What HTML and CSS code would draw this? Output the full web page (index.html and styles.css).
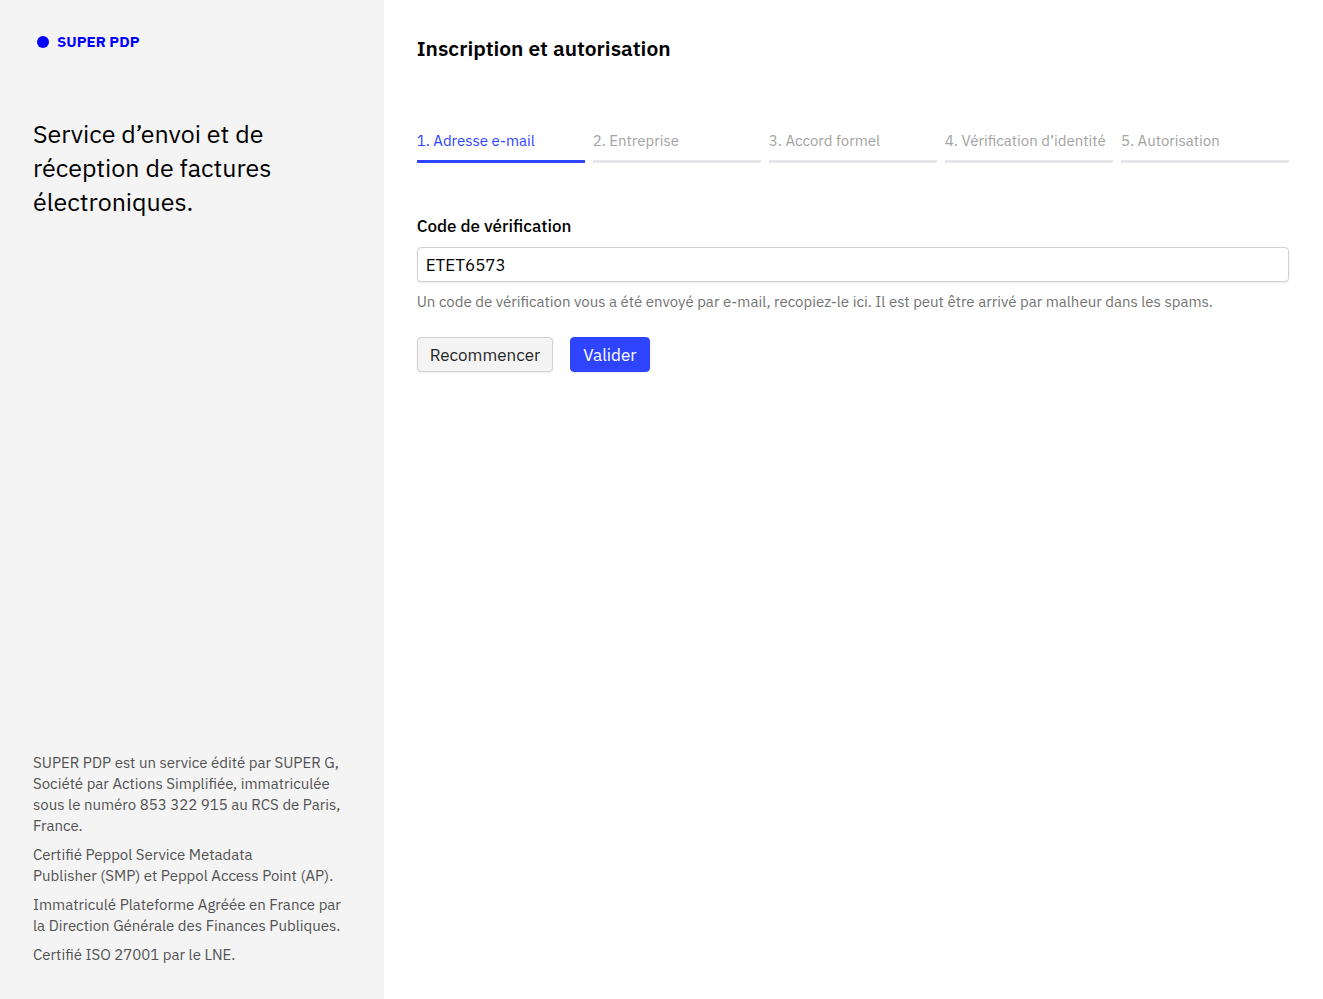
FILE: index.html
```html
<!DOCTYPE html>
<html lang="fr">
  <head>
    <meta charset="UTF-8" />
    <meta name="viewport" content="width=device-width, initial-scale=1.0" />
    <title>Inscription et autorisation - SUPER PDP</title>
    <link rel="stylesheet" href="styles.css">
  </head>
  <body>
    <aside class="sidebar">
      <div>
        <a class="logo" href="/">
          <svg width="12" height="12" viewBox="0 0 12 12" aria-hidden="true">
            <circle cx="6" cy="6" r="6" fill="currentColor" />
          </svg>
          SUPER PDP
        </a>
        <p class="tagline">Service d’envoi et de réception de factures électroniques.</p>
      </div>
      <footer class="legal">
        <p>SUPER PDP est un service édité par SUPER G, Société par Actions Simplifiée, immatriculée sous le numéro 853&nbsp;322&nbsp;915 au RCS de Paris, France.</p>
        <p>Certifié Peppol Service Metadata Publisher&nbsp;(SMP) et Peppol Access Point&nbsp;(AP).</p>
        <p>Immatriculé Plateforme Agréée en France par la Direction Générale des Finances Publiques.</p>
        <p>Certifié ISO 27001 par le LNE.</p>
      </footer>
    </aside>
    <main>
      <h1>Inscription et autorisation</h1>
      <ol class="steps">
        <li class="active">1. Adresse e-mail</li>
        <li>2. Entreprise</li>
        <li>3. Accord formel</li>
        <li>4. Vérification d’identité</li>
        <li>5. Autorisation</li>
      </ol>
      <form>
        <label for="code">Code de vérification</label>
        <input type="text" id="code" name="code" value="ETET6573" aria-describedby="codeHelp" />
        <p class="help" id="codeHelp">Un code de vérification vous a été envoyé par e-mail, recopiez-le ici. Il est peut être arrivé par malheur dans les spams.</p>
        <div class="actions">
          <button type="button">Recommencer</button>
          <button type="submit" class="primary">Valider</button>
        </div>
      </form>
    </main>
  </body>
</html>
```
FILE: styles.css
```css
* {
  box-sizing: border-box;
}

body {
  font-family: "IBM Plex Sans", Roboto, sans-serif;
  font-size: 17px;
  line-height: 25px;
  color: #000;
  background-color: #fff;
  margin: 0;
  display: flex;
  min-height: 100vh;
}

h1,
p {
  margin: 0;
}

.sidebar {
  flex: 0 0 29%;
  display: flex;
  flex-direction: column;
  justify-content: space-between;
  padding: 34px 33px;
  background-color: #f4f4f4;
}

.logo {
  display: flex;
  align-items: center;
  gap: 8px;
  padding-left: 4px;
  color: #00f;
  font-size: 15px;
  font-weight: 700;
  line-height: 16px;
  text-decoration: none;
}

.tagline {
  margin-top: 67px;
  font-size: 25px;
  line-height: 34px;
}

.legal {
  display: flex;
  flex-direction: column;
  gap: 8px;
  color: #525252;
  font-size: 15px;
  line-height: 21px;
}

main {
  flex: 1;
  min-width: 0;
  padding: 33px 34px 33px 33px;
}

h1 {
  font-size: 21px;
  font-weight: 600;
  line-height: 30px;
}

.steps {
  display: grid;
  grid-template-columns: repeat(5, 1fr);
  gap: 8px;
  list-style: none;
  margin: 67px 0 51px;
  padding: 0;
  color: #a3a3a3;
  font-size: 15px;
  line-height: 21px;
}

.steps li {
  padding-bottom: 9px;
  border-bottom: 3px solid #e5e5ea;
  white-space: nowrap;
}

.steps .active {
  color: #2e44ff;
  border-color: #2e44ff;
}

label {
  display: block;
  margin-bottom: 8px;
  font-weight: 500;
}

input,
button {
  height: 35px;
  border: 1px solid #d1d1d1;
  border-radius: 4px;
  box-shadow: 0 1px 2px rgba(0, 0, 0, 0.08);
  font: inherit;
}

input {
  display: block;
  width: 100%;
  padding: 0 8px;
  color: #000;
}

.help {
  margin: 9px 0 25px;
  color: #737373;
  font-size: 15px;
  line-height: 21px;
}

.actions {
  display: flex;
  gap: 17px;
}

button {
  padding: 2px 12px 0;
  background-color: #f4f4f4;
  color: #262626;
  cursor: pointer;
}

button.primary {
  background-color: #2e44ff;
  border-color: #2e44ff;
  color: #fff;
}
```
